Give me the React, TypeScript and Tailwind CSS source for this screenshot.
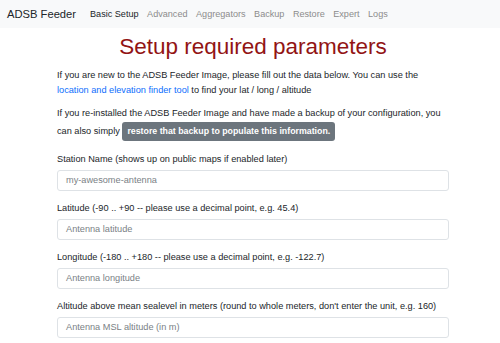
const navLinks = ["Basic Setup", "Advanced", "Aggregators", "Backup", "Restore", "Expert", "Logs"];

const fields = [
  { label: "Station Name (shows up on public maps if enabled later)", placeholder: "my-awesome-antenna" },
  { label: "Latitude (-90 .. +90 -- please use a decimal point, e.g. 45.4)", placeholder: "Antenna latitude" },
  { label: "Longitude (-180 .. +180 -- please use a decimal point, e.g. -122.7)", placeholder: "Antenna longitude" },
  {
    label: "Altitude above mean sealevel in meters (round to whole meters, don't enter the unit, e.g. 160)",
    placeholder: "Antenna MSL altitude (in m)",
  },
];

export default function App() {
  return (
    <div className="h-[343px] overflow-hidden bg-white text-[#212529] font-['Liberation_Sans',Arial,sans-serif]">
      {/* Navbar */}
      <nav className="h-[28px] bg-[#f8f9fa] flex items-center px-[7px]">
        <span className="text-[11.2px] leading-[14px] mr-[14px]">ADSB Feeder</span>
        <div className="flex gap-[8.5px] text-[9.1px] leading-[12px]">
          {navLinks.map((l, i) => (
            <span key={l} className={i === 0 ? "text-[#212529]" : "text-[#8c8c8c]"}>
              {l}
            </span>
          ))}
        </div>
      </nav>

      <div className="w-[392px] ml-[57px] text-[9.2px]">
        <h1 className="text-center text-[22.5px] leading-[30px] text-[#921414] mt-[4px] mb-[6px]">
          Setup required parameters
        </h1>

        <p className="leading-[15px] mb-[6px]">
          If you are new to the ADSB Feeder Image, please fill out the data below. You can use the{" "}
          <span className="text-[#0d6efd]">location and elevation finder tool</span> to find your lat / long / altitude
        </p>

        <p className="leading-[18px] mb-[11px]">
          If you re-installed the ADSB Feeder Image and have made a backup of your configuration, you can also simply{" "}
          <span className="inline-block align-middle bg-[#6c757d] text-white text-[8.8px] font-bold rounded-[3px] px-[5px] leading-[19px]">
            restore that backup to populate this information.
          </span>
        </p>

        <div className="flex flex-col gap-[10px]">
          {fields.map((f) => (
            <div key={f.label} className="flex flex-col gap-[4px]">
              <label className="leading-[14px]">{f.label}</label>
              <div className="h-[21px] border border-[#dee2e6] rounded-[3px] flex items-center px-[8px] text-[#7a7f85]">
                {f.placeholder}
              </div>
            </div>
          ))}
        </div>
      </div>
    </div>
  );
}
